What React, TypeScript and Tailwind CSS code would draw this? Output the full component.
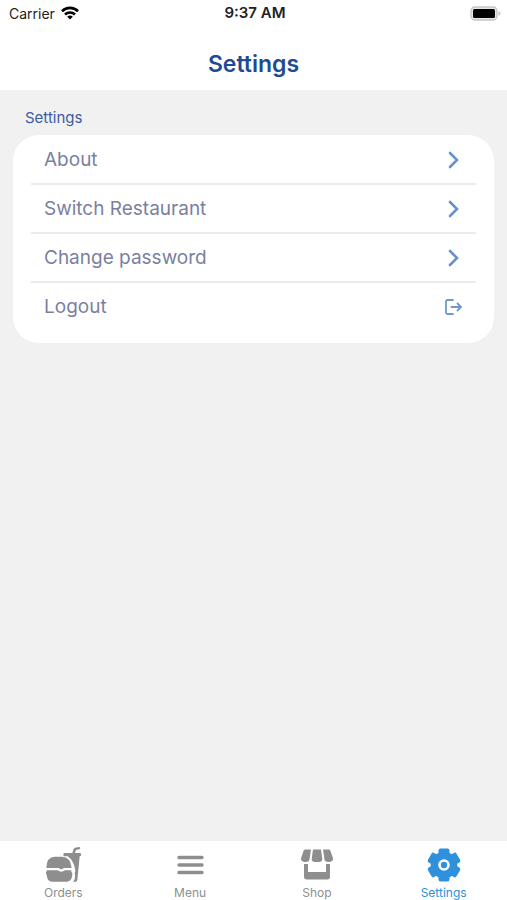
import type { ReactNode } from "react"

function WifiIcon() {
  return (
    <svg viewBox="0 0 18 14" className="h-[14px] w-[18px]" fill="none" stroke="#000" strokeWidth="2.6">
      <path d="M1 5.2a11.4 11.4 0 0 1 16 0" />
      <path d="M4 8.5a7.2 7.2 0 0 1 10 0" />
      <path d="M9 13.6 6.2 10.8a4 4 0 0 1 5.6 0Z" fill="#000" stroke="none" />
    </svg>
  )
}

function BatteryIcon() {
  return (
    <svg viewBox="0 0 31 15" className="h-[15px] w-[31px]">
      <rect x="1" y="1" width="26" height="13" rx="4" fill="#e6e6e6" stroke="#c6c6c6" strokeWidth="1.4" />
      <rect x="3" y="3" width="22" height="9" rx="1.5" fill="#000" />
      <path d="M28.5 5.3c1.6.4 2 1.2 2 2.2s-.4 1.8-2 2.2Z" fill="#c6c6c6" />
    </svg>
  )
}

function ChevronIcon() {
  return (
    <svg viewBox="0 0 12 18" className="h-[18px] w-3" fill="none" stroke="#6792c9" strokeWidth="2.6">
      <path d="m2 2 7 7-7 7" strokeLinecap="round" />
    </svg>
  )
}

function LogoutIcon() {
  return (
    <svg
      viewBox="0 0 18 18"
      className="h-[18px] w-[18px]"
      fill="none"
      stroke="#6f98cf"
      strokeWidth="1.8"
      strokeLinecap="round"
      strokeLinejoin="round"
    >
      <path d="M8 2H2.500A1.500 1.500 0 0 0 1 3.500v11A1.500 1.500 0 0 0 2.500 16H8" />
      <path d="M6.500 9H16M12.500 5.500 16 9l-3.500 3.500" />
    </svg>
  )
}

function OrdersIcon() {
  return (
    <svg viewBox="0 0 108 108" className="size-9" fill="currentColor">
      {/* cup, lid and straw */}
      <path d="M58 18h24l4-12q1-3 4-4l12-2q4 0 4 3t-3 4L93 9l-3 9h15q3 0 3 3v4q0 3-3 3h-1l-7 71q-1 5-5 5H84q5-5 6-12 1-8-1-14 4-5 1-13-5-25-22-37H58q-3 0-3-5t3-5Z" />
      {/* burger */}
      <path d="M4 63Q5 29 29 29h22q25 0 29 34H59q-4 0-6 2-4 3-8 0-2-2-6-2Z" />
      <path d="M6 70h31q3 0 5 2 7 5 14 0 2-2 5-2h18v5q4 3 3 7-1 22-16 22H21Q7 104 5 84q-3-3-2-8Z" />
    </svg>
  )
}

function MenuIcon() {
  return (
    <svg viewBox="0 0 36 36" className="size-9" fill="none" stroke="currentColor" strokeWidth="3.4">
      <path d="M7 10.500h23M7 18h23M7 25.500h23" strokeLinecap="round" />
    </svg>
  )
}

function ShopIcon() {
  return (
    <svg viewBox="0 0 36 36" className="size-9" fill="currentColor">
      <path d="M6.500 2.500h5.500L10.500 12.500c-.3 1.700-1.700 2.500-4 2.500-3 0-5.100-1.600-4.400-4L4.500 4C4.900 3 5.400 2.500 6.500 2.500Z" />
      <path d="M14 2.500h8l1.300 9.500c.2 1.900-1.300 3-3.300 3h-4c-2 0-3.500-1.100-3.300-3Z" />
      <path d="M29.500 2.500H24l1.500 10c.3 1.700 1.700 2.500 4 2.500 3 0 5.100-1.600 4.400-4L31.500 4c-.4-1-.9-1.500-2-1.500Z" />
      <path d="M5 17h4v8h18v-8h4v13c0 1.500-1 2.500-2.500 2.500h-21C6 32.500 5 31.500 5 30Z" />
    </svg>
  )
}

function GearIcon() {
  return (
    <svg viewBox="0 0 36 36" className="size-9">
      <g fill="currentColor">
        <circle cx="18" cy="18" r="13.300" />
        <rect x="12.500" y="1.500" width="11" height="33" rx="2" />
        <rect x="12.500" y="1.500" width="11" height="33" rx="2" transform="rotate(60 18 18)" />
        <rect x="12.500" y="1.500" width="11" height="33" rx="2" transform="rotate(120 18 18)" />
      </g>
      <circle cx="18" cy="18" r="4.500" fill="none" stroke="#fff" strokeWidth="2.600" />
    </svg>
  )
}

const rows: { label: string; icon: ReactNode }[] = [
  { label: "About", icon: <ChevronIcon /> },
  { label: "Switch Restaurant", icon: <ChevronIcon /> },
  { label: "Change password", icon: <ChevronIcon /> },
  { label: "Logout", icon: <LogoutIcon /> },
]

const tabs: { label: string; icon: ReactNode; active?: boolean }[] = [
  { label: "Orders", icon: <OrdersIcon /> },
  { label: "Menu", icon: <MenuIcon /> },
  { label: "Shop", icon: <ShopIcon /> },
  { label: "Settings", icon: <GearIcon />, active: true },
]

export default function App() {
  return (
    <div className="flex min-h-screen flex-col bg-[#f1f1f1] font-['Inter',sans-serif]">
      <header className="bg-white">
        <div className="grid h-[26px] grid-cols-3 items-center pr-[6px] pl-[9px] text-[14px] text-[#222]">
          <div className="flex items-center gap-[6px]">
            <span>Carrier</span>
            <WifiIcon />
          </div>
          <span className="text-center text-[15px] font-semibold">9:37 AM</span>
          <div className="flex justify-end">
            <BatteryIcon />
          </div>
        </div>
        <h1 className="pt-[22px] pb-[10px] text-center text-[23px] leading-8 font-semibold text-[#1f4b93]">Settings</h1>
      </header>

      <main className="flex-1 px-[13px] pt-[18px]">
        <h2 className="mb-2 px-3 text-[15px] leading-[19px] text-[#3a5ba4]">Settings</h2>
        <ul className="rounded-[26px] bg-white px-[18px] pt-[1px] pb-[13px]">
          {rows.map((row) => (
            <li key={row.label} className="border-b-2 border-[#ebebed] last:border-b-0">
              <button className="flex h-[47px] w-full items-center justify-between px-[13px] text-left text-[19px] text-[#7b7fa0]">
                <span className="pt-[2px]">{row.label}</span>
                <span className="flex w-[18px] justify-center">{row.icon}</span>
              </button>
            </li>
          ))}
        </ul>
      </main>

      <nav className="grid h-[59px] grid-cols-4 bg-white pt-[6px]">
        {tabs.map((tab) => (
          <button
            key={tab.label}
            className={
              tab.active
                ? "flex flex-col items-center text-[12px] leading-5 text-[#2f90dc]"
                : "flex flex-col items-center text-[12px] leading-5 text-[#8e8e8e]"
            }
          >
            {tab.icon}
            {tab.label}
          </button>
        ))}
      </nav>
    </div>
  )
}
